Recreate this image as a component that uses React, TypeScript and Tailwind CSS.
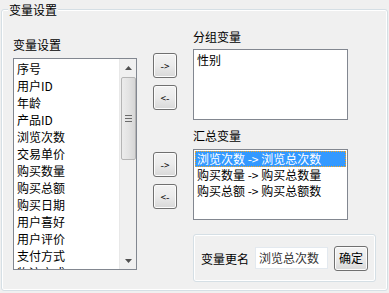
import React from 'react'

const font = { fontFamily: '"Noto Sans CJK SC", "Noto Sans", sans-serif' }

const allVars = ['序号', '用户ID', '年龄', '产品ID', '浏览次数', '交易单价', '购买数量', '购买总额', '购买日期', '用户喜好', '用户评价', '支付方式', '物流方式']

const summaryVars = [
  { from: '浏览次数', to: '浏览总次数' },
  { from: '购买数量', to: '购买总数量' },
  { from: '购买总额', to: '购买总额数' },
]

function MoveButton({ label }: { label: string }) {
  return (
    <button className="w-[24px] h-[25px] border border-[#707070] rounded-[3px] bg-gradient-to-b from-[#f3f3f3] via-[#ebebeb] to-[#d8d8d8] text-[10px] leading-none text-black flex items-center justify-center shadow-[inset_0_0_0_1px_#fcfcfc]">
      {label}
    </button>
  )
}

function ScrollBar() {
  return (
    <div className="w-[17px] h-full bg-[#f0f0f0] border-l border-[#e8e8e8] flex flex-col items-center">
      <div className="h-[17px] w-full flex items-center justify-center">
        <svg width="7" height="4" viewBox="0 0 7 4">
          <path d="M3.5 0 L7 4 L0 4 Z" fill="#505050" />
        </svg>
      </div>
      <div className="mt-[1px] w-[15px] h-[83px] rounded-[2px] border border-[#b5b5b5] bg-gradient-to-r from-[#ececec] via-[#e3e3e3] to-[#d6d6d6] flex flex-col items-center justify-center gap-[2px]">
        <div className="w-[7px] h-[1px] bg-[#6b6b6b]" />
        <div className="w-[7px] h-[1px] bg-[#6b6b6b]" />
        <div className="w-[7px] h-[1px] bg-[#6b6b6b]" />
      </div>
      <div className="flex-1" />
      <div className="h-[17px] w-full flex items-center justify-center">
        <svg width="7" height="4" viewBox="0 0 7 4">
          <path d="M0 0 L7 0 L3.5 4 Z" fill="#505050" />
        </svg>
      </div>
    </div>
  )
}

export default function App() {
  return (
    <div className="w-[389px] h-[293px] bg-[#f0f0f0] overflow-hidden text-[12px] text-black" style={font}>
      <div className="relative mt-[9px] ml-[1px] w-[387px] h-[282px] border border-[#d5dfe5] rounded-[3px] shadow-[inset_0_0_0_1px_#ffffff]">
        {/* Group title */}
        <span className="absolute -top-[9px] left-[6px] px-[1px] bg-[#f0f0f0] leading-[17px]">变量设置</span>

        <div className="flex">
          {/* Left: all variables */}
          <div className="ml-[11px] flex flex-col">
            <div className="mt-[26px] leading-[17px]">变量设置</div>
            <div className="mt-[5px] w-[124px] h-[212px] border border-[#828790] bg-white flex overflow-hidden">
              <div className="flex-1 pt-[1px] pl-[3px] overflow-hidden">
                {allVars.map((v) => (
                  <div key={v} className="leading-[17px] h-[17px] whitespace-nowrap">{v}</div>
                ))}
              </div>
              <ScrollBar />
            </div>
          </div>

          {/* Middle: move buttons */}
          <div className="ml-[16px] flex flex-col">
            <div className="mt-[43px]"><MoveButton label="->" /></div>
            <div className="mt-[7px]"><MoveButton label="<-" /></div>
            <div className="mt-[42px]"><MoveButton label="->" /></div>
            <div className="mt-[7px]"><MoveButton label="<-" /></div>
          </div>

          {/* Right: group + summary */}
          <div className="ml-[16px] flex flex-col">
            <div className="mt-[18px] leading-[17px]">分组变量</div>
            <div className="mt-[4px] w-[155px] h-[71px] border border-[#828790] bg-white pt-[1px] pl-[3px]">
              <div className="leading-[17px]">性别</div>
            </div>

            <div className="mt-[7px] leading-[17px]">汇总变量</div>
            <div className="mt-[5px] w-[155px] h-[71px] border border-[#828790] bg-white p-px">
              {summaryVars.map((s, i) => (
                <div
                  key={s.from}
                  className={`h-[16px] leading-[16px] pl-[2px] whitespace-nowrap ${i === 0 ? 'bg-[#3399ff] text-white outline outline-1 outline-dotted outline-[#f5a623] -outline-offset-1' : ''}`}
                >
                  {s.from} -&gt; {s.to}
                </div>
              ))}
            </div>

            <div className="mt-[14px] w-[183px] h-[48px] border border-[#d5dfe5] rounded-[3px] shadow-[inset_0_0_0_1px_#ffffff] flex items-center pl-[7px]">
              <span className="leading-[17px]">变量更名</span>
              <div className="ml-[6px] w-[73px] h-[22px] bg-white border border-[#e3e9ef] pl-[3px] leading-[20px] text-[#333]">浏览总次数</div>
              <button className="ml-[6px] w-[34px] h-[25px] border border-[#707070] rounded-[3px] bg-gradient-to-b from-[#f3f3f3] via-[#ebebeb] to-[#d8d8d8] leading-none shadow-[inset_0_0_0_1px_#fcfcfc]">
                确定
              </button>
            </div>
          </div>
        </div>
      </div>
    </div>
  )
}
